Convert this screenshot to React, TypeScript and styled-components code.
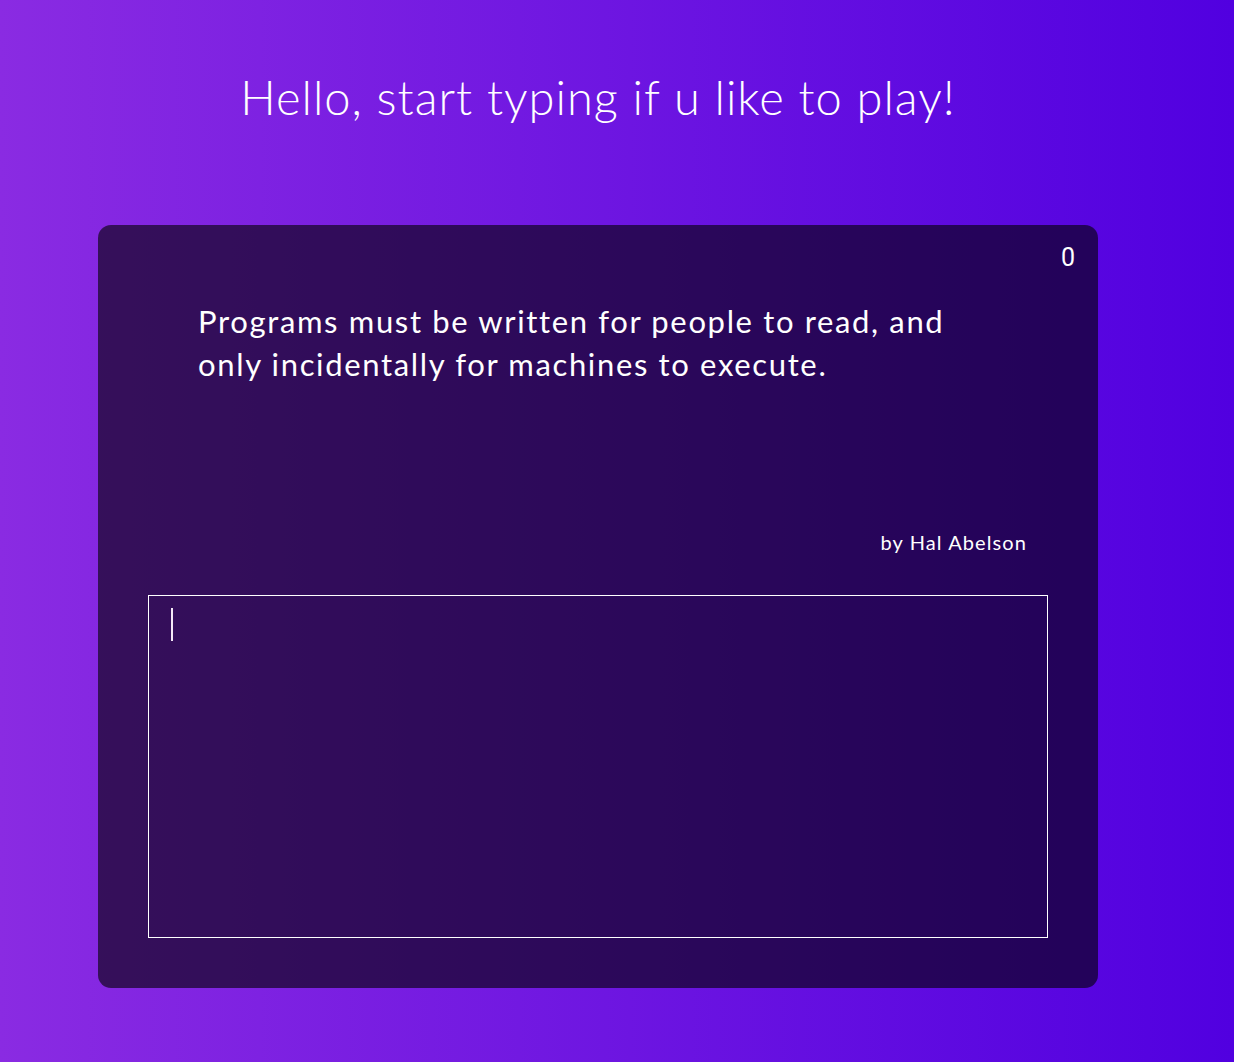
import React from "react";
import styled, { createGlobalStyle } from "styled-components";

const Global = createGlobalStyle`
  html, body { margin: 0; padding: 0; }
  body {
    min-height: 100vh;
    background: linear-gradient(to right, #8a2be2, #5100e0);
    font-family: Lato, "Open Sans", sans-serif;
    color: #fff;
  }
`;

const Main = styled.main`
  box-sizing: border-box;
  min-height: 100vh;
  padding: 69px 0 74px 98px;
`;

const Column = styled.div`
  width: 1000px;
  display: flex;
  flex-direction: column;
  gap: 100px;
`;

const Title = styled.h1`
  margin: 0;
  font-weight: 300;
  font-size: 47px;
  line-height: 56px;
  text-align: center;
  letter-spacing: 1px;
`;

const Card = styled.section`
  position: relative;
  box-sizing: border-box;
  background: rgba(0, 0, 0, 0.6);
  border-radius: 13px;
  padding: 75px 50px 50px;
  display: flex;
  flex-direction: column;
`;

const Timer = styled.span`
  position: absolute;
  top: 19px;
  right: 23px;
  font-family: Roboto, "Liberation Sans", sans-serif;
  font-size: 25px;
  line-height: 28px;
`;

const Quote = styled.p`
  margin: 0;
  padding: 0 60px 0 50px;
  font-size: 31px;
  line-height: 43px;
  font-weight: 400;
  letter-spacing: 1.65px;
`;

const Author = styled.p`
  margin: 144px 0 0;
  padding-right: 21px;
  text-align: right;
  font-size: 20px;
  line-height: 24px;
  letter-spacing: 1.1px;
`;

const InputWrap = styled.div`
  position: relative;
  margin-top: 41px;
  width: 900px;
  height: 343px;
`;

const Input = styled.textarea`
  box-sizing: border-box;
  display: block;
  width: 100%;
  height: 100%;
  background: transparent;
  border: 1px solid #fff;
  border-radius: 0;
  outline: none;
  resize: none;
  color: #fff;
  caret-color: transparent;
  font-family: Lato, sans-serif;
  font-size: 28px;
  line-height: 34px;
  padding: 12px 22px;
`;

const Caret = styled.span`
  position: absolute;
  left: 23px;
  top: 13px;
  width: 2px;
  height: 33px;
  background: #f4e8f6;
  pointer-events: none;
`;

export default function App() {
  return (
    <>
      <Global />
      <Main>
        <Column>
          <Title>Hello, start typing if u like to play!</Title>
          <Card>
            <Timer>0</Timer>
            <Quote>
              Programs must be written for people to read, and only incidentally for machines to
              execute.
            </Quote>
            <Author>by Hal Abelson</Author>
            <InputWrap>
              <Input autoFocus spellCheck={false} />
              <Caret />
            </InputWrap>
          </Card>
        </Column>
      </Main>
    </>
  );
}
